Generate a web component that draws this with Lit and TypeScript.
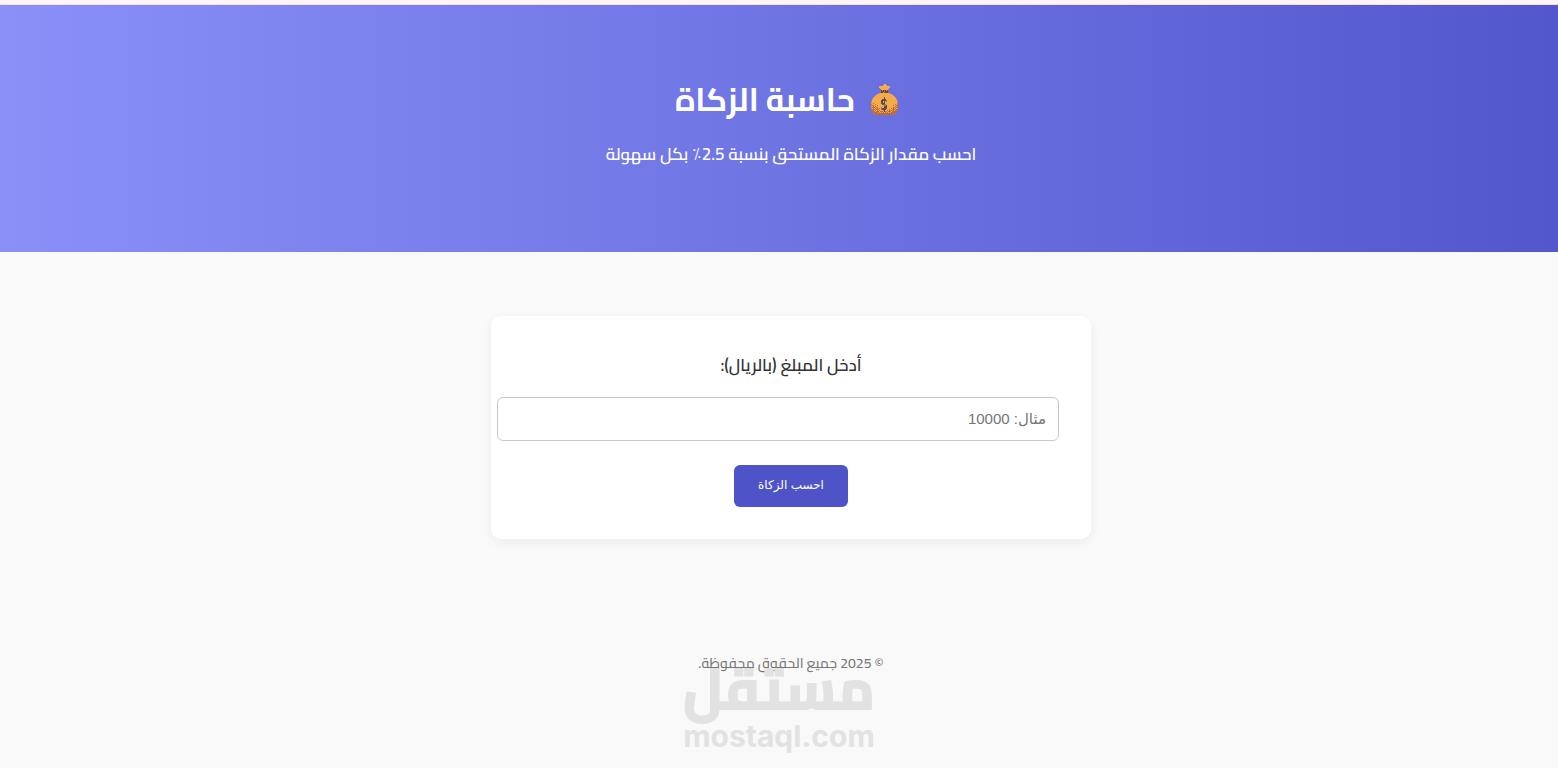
import { LitElement, html, css } from "lit";
import { customElement, state } from "lit/decorators.js";

@customElement("money-bag")
class MoneyBag extends LitElement {
  static styles = css`
    :host { display: inline-block; padding-top: 2px; line-height: 0; }
    svg { display: block; width: 28px; height: 32px; }
  `;

  render() {
    return html`
      <svg viewBox="0 0 28 32" shape-rendering="crispEdges" aria-hidden="true">
        <defs>
          <pattern id="grain" width="2" height="2" patternUnits="userSpaceOnUse">
            <rect width="1" height="1" fill="#bd6d38" />
            <rect x="1" y="1" width="1" height="1" fill="#bd6d38" />
          </pattern>
          <pattern id="sparse" width="4" height="2" patternUnits="userSpaceOnUse">
            <rect width="1" height="1" fill="#bd6d38" />
            <rect x="2" y="1" width="1" height="1" fill="#bd6d38" />
          </pattern>
          <clipPath id="bag">
            <path d="M10 9h7c6 1 10 6 10 12 0 7-3 10-7 10H7c-4 0-7-3-7-10C0 15 4 10 10 9Z" />
          </clipPath>
        </defs>
        <path d="M13 0h1l2 2h3v2l-2 1v2h-7V5L8 4V2h3Z" fill="#f6ab4b" />
        <g clip-path="url(#bag)">
          <rect width="28" height="32" fill="#f6ab4b" />
          <path d="M0 17l5 3 4 4 4 2 5-1 4-4 5-4v14H0Z" fill="url(#sparse)" />
          <path d="M0 20l5 3 4 3 5 2 5-2 4-3 4-4v12H0Z" fill="url(#grain)" />
          <path d="M0 25l4 3 5 1 9 0 5-1 4-4v9H0Z" fill="#bd6d38" />
        </g>
        <path d="M10 6h7v3h-7z" fill="#6d4637" />
        <path d="M11 6h1v1h-1zM13 7h1v1h-1zM15 6h1v1h-1zM12 8h1v1h-1z" fill="#d98a40" />
        <g fill="#5b4c54">
          <path d="M13 13h1v15h-1zM11 15h4v2h-4zM10 16h2v4h-2zM11 19h3v2h-3zM14 21h2v4h-2zM11 24h4v2h-4z" />
          <path d="M15 16h1v2h-1zM10 23h1v2h-1zM13 20h2v2h-2z" fill="#85786e" />
        </g>
      </svg>
    `;
  }
}

@customElement("app-root")
class AppRoot extends LitElement {
  @state() private amount = "";
  @state() private result = "";

  static styles = css`
    :host {
      display: block;
      position: relative;
      min-height: 100vh;
      background: #f9f9f9;
      color: #333;
      font-family: Cairo, "DejaVu Sans", sans-serif;
      text-align: center;
      direction: rtl;
    }
    .strip { height: 4px; background: #fff6f3; border-bottom: 1px solid #fbdcd6; }
    .hero {
      display: flex;
      flex-direction: column;
      align-items: center;
      padding: 64px 0 72px 24px;
      background: linear-gradient(to left, #5258cc, #8a90f8);
      color: #fff;
    }
    .title {
      display: flex;
      align-items: center;
      gap: 16px;
      margin: 0;
      padding-inline-start: 8px;
      font-size: 32px;
      line-height: 60px;
      font-weight: 700;
    }
    .lead { margin: 8px 0; font-size: 17px; line-height: 35px; font-weight: 600; }
    main { display: flex; justify-content: center; padding: 64px 0 64px 24px; }
    .card {
      box-sizing: border-box;
      width: 100%;
      max-width: 600px;
      padding: 32px;
      border-radius: 10px;
      background: #fff;
      box-shadow: 0 4px 12px rgba(0, 0, 0, 0.05);
    }
    .label { display: block; margin-bottom: 15px; font-size: 17px; line-height: 34px; font-weight: 600; }
    .amount {
      display: block;
      width: 100%;
      height: 18px;
      margin: 0 0 24px;
      padding: 12px;
      border: 1px solid #c8c8cc;
      border-radius: 6px;
      background: #fff;
      color: #333;
      font: 15px/18px "Liberation Sans", "DejaVu Sans", sans-serif;
      direction: rtl;
    }
    .amount::placeholder { color: #757575; opacity: 1; }
    .submit {
      height: 42px;
      padding: 0 24px 2px;
      border: 0;
      border-radius: 6px;
      background: #4e54c8;
      color: #fff;
      font: 12px/18px "Liberation Sans", "DejaVu Sans", sans-serif;
      cursor: pointer;
    }
    .result:empty { display: none; }
    footer { padding: 44px 0 32px 24px; color: #777; font-size: 14px; line-height: 32px; font-weight: 500; }
    .mark {
      position: absolute;
      left: 50%;
      top: 660px;
      transform: translateX(-50%);
      color: #e2e2e2;
      font-weight: 700;
      direction: ltr;
      pointer-events: none;
    }
    .mark-name {
      display: block;
      font-size: 56px;
      line-height: 58px;
      -webkit-text-stroke: 2px #e2e2e2;
      stroke-linejoin: round;
    }
    .mark-site { display: block; font: 700 30px/36px Inter, sans-serif; }
  `;

  private calculate(e: Event) {
    e.preventDefault();
    const value = Number(this.amount);
    this.result = value > 0 ? `مقدار الزكاة: ${(value * 0.025).toFixed(2)} ريال` : "";
  }

  render() {
    return html`
      <div class="strip"></div>
      <header class="hero">
        <h1 class="title"><money-bag></money-bag><span>حاسبة الزكاة</span></h1>
        <p class="lead">احسب مقدار الزكاة المستحق بنسبة 2.5٪ بكل سهولة</p>
      </header>
      <main>
        <form class="card" @submit=${this.calculate}>
          <label class="label" for="amount">أدخل المبلغ (بالريال):</label>
          <input
            class="amount"
            id="amount"
            inputmode="decimal"
            placeholder="مثال: 10000"
            .value=${this.amount}
            @input=${(e: Event) => (this.amount = (e.target as HTMLInputElement).value)}
          />
          <button class="submit" type="submit">احسب الزكاة</button>
          <output class="result" for="amount">${this.result}</output>
        </form>
      </main>
      <footer>© 2025 جميع الحقوق محفوظة.</footer>
      <div class="mark">
        <span class="mark-name">مستقل</span>
        <span class="mark-site">mostaql.com</span>
      </div>
    `;
  }
}
